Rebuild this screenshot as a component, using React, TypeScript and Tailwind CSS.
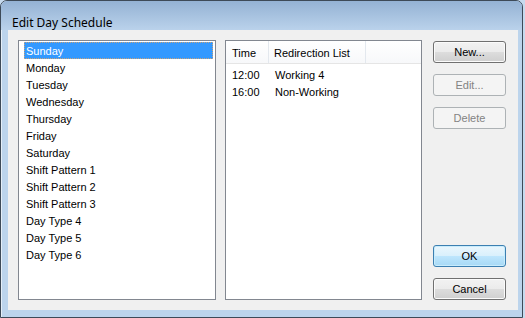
import type { FC, ReactNode } from 'react';

const DAYS = [
  'Sunday',
  'Monday',
  'Tuesday',
  'Wednesday',
  'Thursday',
  'Friday',
  'Saturday',
  'Shift Pattern 1',
  'Shift Pattern 2',
  'Shift Pattern 3',
  'Day Type 4',
  'Day Type 5',
  'Day Type 6',
];

const ENTRIES = [
  { time: '12:00', target: 'Working 4' },
  { time: '16:00', target: 'Non-Working' },
];

type ButtonKind = 'normal' | 'disabled' | 'default';

const BUTTON_STYLES: Record<ButtonKind, string> = {
  normal:
    'border-[#707070] text-black bg-[linear-gradient(#f2f2f2_0%,#ebebeb_50%,#dddddd_50%,#cfcfcf_100%)] shadow-[inset_0_0_0_1px_#fbfbfb]',
  disabled: 'border-[#adb2b5] text-[#838383] bg-[#f4f4f4]',
  default:
    'border-[#3c7fb1] text-black bg-[linear-gradient(#eaf6fd_0%,#d9f0fc_50%,#bee6fd_50%,#a7d9f5_100%)] shadow-[inset_0_0_0_1px_#c8ecfc]',
};

const DlgButton: FC<{ kind?: ButtonKind; children: ReactNode }> = ({ kind = 'normal', children }) => (
  <button
    type="button"
    disabled={kind === 'disabled'}
    className={`w-[73px] h-[22px] rounded-[3px] border text-[11px] leading-none flex items-center justify-center ${BUTTON_STYLES[kind]}`}
  >
    {children}
  </button>
);

export default function App() {
  return (
    <div
      className="w-[525px] h-[318px] bg-[#c6daee] overflow-hidden"
      style={{ fontFamily: '"Liberation Sans", Arial, sans-serif' }}
    >
      {/* Window frame */}
      <div className="w-[523px] h-[318px] rounded-t-[7px] border border-[#3d4a58] bg-[#bcd4ec] flex flex-col shadow-[inset_1px_0_0_#e4eef8]">
        {/* Title bar */}
        <div className="h-[29px] shrink-0 rounded-t-[6px] bg-[linear-gradient(#94b2d4,#bad2eb)] pl-[11px] pt-[9px]">
          <span
            className="text-[12px] leading-[16px] text-black"
            style={{ fontFamily: '"Noto Sans", "Open Sans", sans-serif' }}
          >
            Edit Day Schedule
          </span>
        </div>

        {/* Client area */}
        <div className="ml-[7px] mr-[4px] h-[280px] bg-[#f0f0f0] flex gap-[9px] pt-[10px] pl-[10px]">
          {/* Day list */}
          <div className="w-[198px] h-[260px] bg-white border border-[#828790] pt-[1px] pl-[5px] pr-[2px]">
            {DAYS.map((day, i) => (
              <div
                key={day}
                className={`h-[17px] text-[11px] leading-[18px] pl-[2px] ${
                  i === 0
                    ? 'bg-[#3399ff] text-white outline outline-1 -outline-offset-1 outline-dotted outline-[#c9a27a]'
                    : 'text-black'
                }`}
              >
                {day}
              </div>
            ))}
          </div>

          {/* Schedule list view */}
          <div className="w-[197px] h-[260px] bg-white border border-[#828790] flex flex-col">
            <div className="h-[23px] shrink-0 flex border-b border-[#e5e5e5] bg-[linear-gradient(#ffffff,#f7f8fa)] text-[11px] text-black">
              <div className="w-[43px] pl-[6px] pt-[2px] flex items-center border-r border-[#e3e8ee]">Time</div>
              <div className="w-[97px] pl-[5px] pt-[2px] flex items-center border-r border-[#e3e8ee]">Redirection List</div>
              <div className="flex-1" />
            </div>
            <div className="pt-[3px]">
              {ENTRIES.map((row) => (
                <div key={row.time} className="h-[17px] flex text-[11px] leading-[17px] text-black">
                  <div className="w-[43px] pl-[6px]">{row.time}</div>
                  <div className="pl-[6px]">{row.target}</div>
                </div>
              ))}
            </div>
          </div>

          {/* Buttons */}
          <div className="ml-[2px] w-[73px] h-[260px] flex flex-col justify-between pt-[1px]">
            <div className="flex flex-col gap-[11px]">
              <DlgButton>New...</DlgButton>
              <DlgButton kind="disabled">Edit...</DlgButton>
              <DlgButton kind="disabled">Delete</DlgButton>
            </div>
            <div className="flex flex-col gap-[11px]">
              <DlgButton kind="default">OK</DlgButton>
              <DlgButton>Cancel</DlgButton>
            </div>
          </div>
        </div>
      </div>
    </div>
  );
}
